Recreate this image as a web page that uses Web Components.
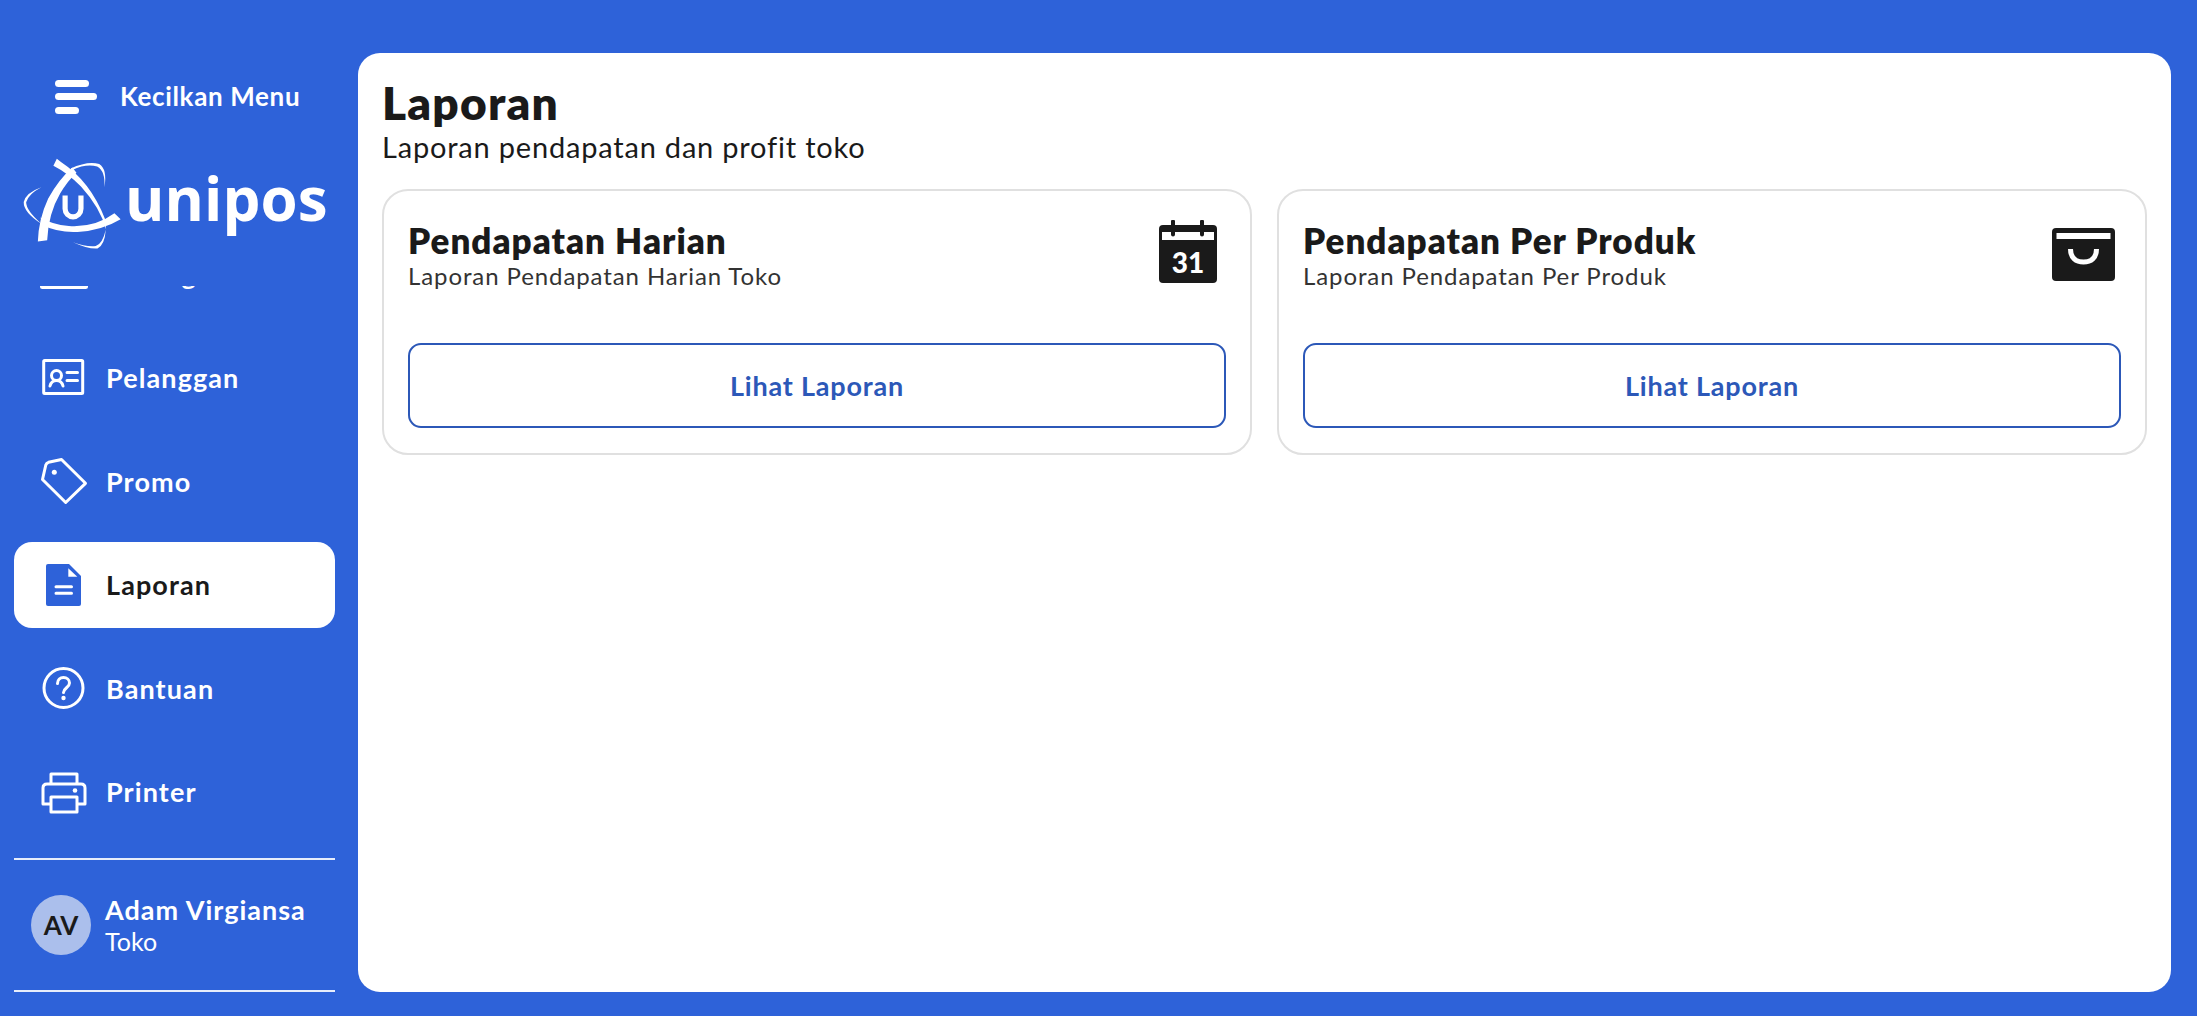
<!DOCTYPE html>
<html lang="id"><head><meta charset="utf-8"><title>Laporan</title>
<style>
html,body{margin:0;height:100%}
body{background:#2e62d9;font-family:Lato,"Noto Sans",sans-serif;color:#1a1a1a;overflow:hidden}
</style></head><body>
<app-shell>
  <side-bar slot="side">
    <nav-item label="Barang" icon="box"></nav-item>
    <nav-item label="Pelanggan" icon="card"></nav-item>
    <nav-item label="Promo" icon="tag"></nav-item>
    <nav-item label="Laporan" icon="doc" active></nav-item>
    <nav-item label="Bantuan" icon="help"></nav-item>
    <nav-item label="Printer" icon="printer"></nav-item>
  </side-bar>
  <page-panel title-text="Laporan" sub="Laporan pendapatan dan profit toko">
    <report-card heading="Pendapatan Harian" sub="Laporan Pendapatan Harian Toko" icon="calendar"></report-card>
    <report-card heading="Pendapatan Per Produk" sub="Laporan Pendapatan Per Produk" icon="bag"></report-card>
  </page-panel>
</app-shell>
<script>
const ICONS={
box:'<rect x="1.500" y="5" width="45" height="32.500" fill="none" stroke="#fff" stroke-width="3" rx="1"/>',
card:'<g fill="none" stroke="#fff" stroke-width="3" stroke-linecap="round" stroke-linejoin="round"><rect x="3.700" y="6.500" width="39" height="33" rx="1"/><circle cx="16.500" cy="21.500" r="5"/><path d="M10 32c1-4 3.500-5.500 6.500-5.500s5.500 1.500 6.500 5.500M27 18.500h10.500M27 26.500h10.500"/></g>',
tag:'<path fill="none" stroke="#fff" stroke-width="3" stroke-linejoin="round" d="M2.500 22.500 5.800 8Q6.500 6 8.500 5.300L21.500 2.500 45.500 26.300 25.700 45.500Z"/><circle cx="14.300" cy="15.300" r="2.500" fill="#fff"/>',
doc:'<path fill="#2e62d9" d="M8 3H29L41 15V43a2 2 0 0 1-2 2H8a2 2 0 0 1-2-2V5a2 2 0 0 1 2-2Z"/><path fill="#fff" d="M28.300 7.300V15.700H37.300Z"/><path d="M16 25.700h15.500M16 32.300h15.500" stroke="#fff" stroke-width="3" stroke-linecap="round"/>',
help:'<g fill="none" stroke="#fff" stroke-width="3" stroke-linecap="round"><circle cx="23.500" cy="24" r="19.500"/><path d="M17.500 19.500c0-4 2.700-6 6-6s6 2.300 6 5.500c0 4.500-6 5-6 9.500"/></g><circle cx="23.500" cy="34" r="2.200" fill="#fff"/>',
printer:'<g fill="none" stroke="#fff" stroke-width="3" stroke-linejoin="round"><path d="M11 16V6h26v10"/><path d="M11 36H3V20q0-4 4-4h34q4 0 4 4v16h-8"/><rect x="11" y="29" width="26" height="15"/></g><circle cx="35" cy="22.500" r="2.300" fill="#fff"/>'
};
class AppShell extends HTMLElement{constructor(){super();this.attachShadow({mode:'open'}).innerHTML=`<style>
:host{display:flex;height:1016px;box-sizing:border-box}
.s{flex:0 0 358px;min-width:0;display:flex}
.m{flex:1;min-width:0;padding:53px 26px 24px 0;display:flex}
</style><div class="s"><slot name="side"></slot></div><div class="m"><slot></slot></div>`}}
class BrandLogo extends HTMLElement{constructor(){super();this.attachShadow({mode:'open'}).innerHTML=`<style>
:host{display:flex;align-items:center;height:94px}
svg{width:100px;height:94px;flex:none;margin-left:22px}
span{font:700 60px/1 "Open Sans",sans-serif;color:#fff;margin:-11px 0 0 3px;letter-spacing:.1px}
</style><svg viewBox="64 322 290 272" fill="#fff">
<path d="M165 330 L178 340 Q262 395 305 505 L308 535 Q290 470 235 410 Q195 370 155 350Z"/>
<path d="M110 570 L137 566 Q140 490 175 430 Q195 395 222 370 L210 355 Q170 390 140 445 Q112 505 110 570Z"/>
<path d="M350 505 L332 488 Q275 530 200 525 Q150 520 118 500 L122 522 Q170 545 225 542 Q295 538 350 505Z"/>
<path d="M205 358 Q255 335 288 345 Q312 360 303 412 Q306 365 282 352 Q250 343 210 362Z"/>
<path d="M120 412 Q75 428 69 455 Q68 485 120 518 Q76 480 76 456 Q82 432 120 412Z"/>
<path d="M212 572 Q255 592 283 590 Q304 580 307 535 Q298 576 278 583 Q250 586 212 572Z"/>
<path d="M189 436V475a23 23 0 0 0 46 0V436" fill="none" stroke="#fff" stroke-width="15"/>
</svg><span>unipos</span>`}}
class SideBar extends HTMLElement{constructor(){super();this.attachShadow({mode:'open'}).innerHTML=`<style>
:host{display:flex;flex-direction:column;width:335px;height:1016px;box-sizing:border-box;padding:75px 0 24px 14px;color:#fff}
.t{display:flex;align-items:center;height:44px;padding-left:41px;gap:23px;font-size:26px;font-weight:700;letter-spacing:.65px}
.t span{margin-top:-2px}
.t svg{width:42px;height:34px;flex:none}
.l{flex:1;min-height:0;overflow:hidden;margin-top:36px}
.i{display:flex;flex-direction:column;gap:17.5px;margin-top:-55px}
</style><div class="t"><svg viewBox="0 0 42 34" fill="#fff"><rect width="34" height="7" y="0" rx="3.500"/><rect width="42" height="7" y="13" rx="3.500"/><rect width="24" height="7" y="27" rx="3.500"/></svg><span>Kecilkan Menu</span></div>
<brand-logo style="margin:37px 0 0 -14px"></brand-logo>
<div class="l"><div class="i"><slot></slot></div></div>
<user-chip name="Adam Virgiansa" role="Toko" initials="AV"></user-chip>`}}
class NavItem extends HTMLElement{constructor(){super();const a=this.hasAttribute('active');this.attachShadow({mode:'open'}).innerHTML=`<style>
:host{display:flex;align-items:center;height:86px;border-radius:18px;padding-left:26px;gap:18px;font-size:27px;font-weight:700;letter-spacing:1.1px;color:${a?'#1a1a1a':'#fff'};background:${a?'#fff':'transparent'};box-sizing:border-box}
svg{width:48px;height:48px;flex:none;overflow:visible}
</style><svg viewBox="0 0 48 48">${ICONS[this.getAttribute('icon')]}</svg><span>${this.getAttribute('label')}</span>`}}
class UserChip extends HTMLElement{constructor(){super();this.attachShadow({mode:'open'}).innerHTML=`<style>
:host{display:flex;align-items:center;height:134px;flex:none;box-sizing:border-box;border-top:2px solid #e7edfb;border-bottom:2px solid #e7edfb;padding-left:17px;gap:14px;color:#fff}
.a{width:60px;height:60px;border-radius:50%;background:#abbfec;color:#1a1a1a;display:flex;align-items:center;justify-content:center;font-size:26px;font-weight:700;flex:none}
b{display:block;font-size:27px;line-height:32px;font-weight:700;letter-spacing:1px}
span{display:block;font-size:25px;line-height:30px}
</style><div class="a">${this.getAttribute('initials')}</div><div><b>${this.getAttribute('name')}</b><span>${this.getAttribute('role')}</span></div>`}}
class PagePanel extends HTMLElement{constructor(){super();this.attachShadow({mode:'open'}).innerHTML=`<style>
:host{display:block;flex:1;background:#fff;border-radius:22px;padding:25px 24px 24px;box-sizing:border-box}
h1{margin:0;font-size:46px;line-height:50px;font-weight:800;color:#1a1a1a;letter-spacing:1.2px}
p{margin:0 0 23px;font-size:29px;line-height:38px;color:#1a1a1a;letter-spacing:.8px}
.g{display:grid;grid-template-columns:1fr 1fr;gap:25px}
</style><h1>${this.getAttribute('title-text')}</h1><p>${this.getAttribute('sub')}</p><div class="g"><slot></slot></div>`}}
const CARD={
calendar:'<svg viewBox="0 0 58 63" width="58" height="63" style="margin:5px 9px 0 0;flex:none"><rect y="5" width="58" height="58" rx="4" fill="#1a1a1a"/><rect x="3" y="12" width="52" height="8" fill="#fff"/><path d="M14 1.500v13M43 1.500v13" stroke="#1a1a1a" stroke-width="4" stroke-linecap="round"/><text x="29" y="53" text-anchor="middle" font-family="Lato" font-weight="900" font-size="28" fill="#fff">31</text></svg>',
bag:'<svg viewBox="0 0 63 53" width="63" height="53" style="margin:13px 6px 0 0;flex:none"><rect width="63" height="53" rx="4" fill="#1a1a1a"/><rect x="4.500" y="5" width="54" height="6" fill="#fff"/><path d="M18.500 21c0 9 5.500 13 13 13s13-4 13-13" fill="none" stroke="#fff" stroke-width="5"/></svg>'};
class ReportCard extends HTMLElement{constructor(){super();this.attachShadow({mode:'open'}).innerHTML=`<style>
:host{display:block;height:266px;box-sizing:border-box;border:2px solid #e0e0e0;border-radius:26px;padding:24px}
.h{display:flex;justify-content:space-between;align-items:flex-start;height:128px}
h2{margin:7px 0 0;font-size:35px;line-height:36px;font-weight:800;color:#1a1a1a;letter-spacing:1px}
p{margin:3px 0 0;font-size:24px;line-height:30px;color:#333;letter-spacing:.9px}
</style><div class="h"><div><h2>${this.getAttribute('heading')}</h2><p>${this.getAttribute('sub')}</p></div>${CARD[this.getAttribute('icon')]}</div><action-button>Lihat Laporan</action-button>`}}
class ActionButton extends HTMLElement{constructor(){super();this.attachShadow({mode:'open'}).innerHTML=`<style>
:host{display:flex;align-items:center;justify-content:center;height:85px;box-sizing:border-box;border:2px solid #2c58b8;border-radius:13px;color:#2c58b8;font-size:27px;font-weight:700;letter-spacing:.8px}
</style><slot></slot>`}}
customElements.define('nav-item',NavItem);customElements.define('user-chip',UserChip);customElements.define('brand-logo',BrandLogo);
customElements.define('side-bar',SideBar);customElements.define('action-button',ActionButton);customElements.define('report-card',ReportCard);
customElements.define('page-panel',PagePanel);customElements.define('app-shell',AppShell);
</script></body></html>
